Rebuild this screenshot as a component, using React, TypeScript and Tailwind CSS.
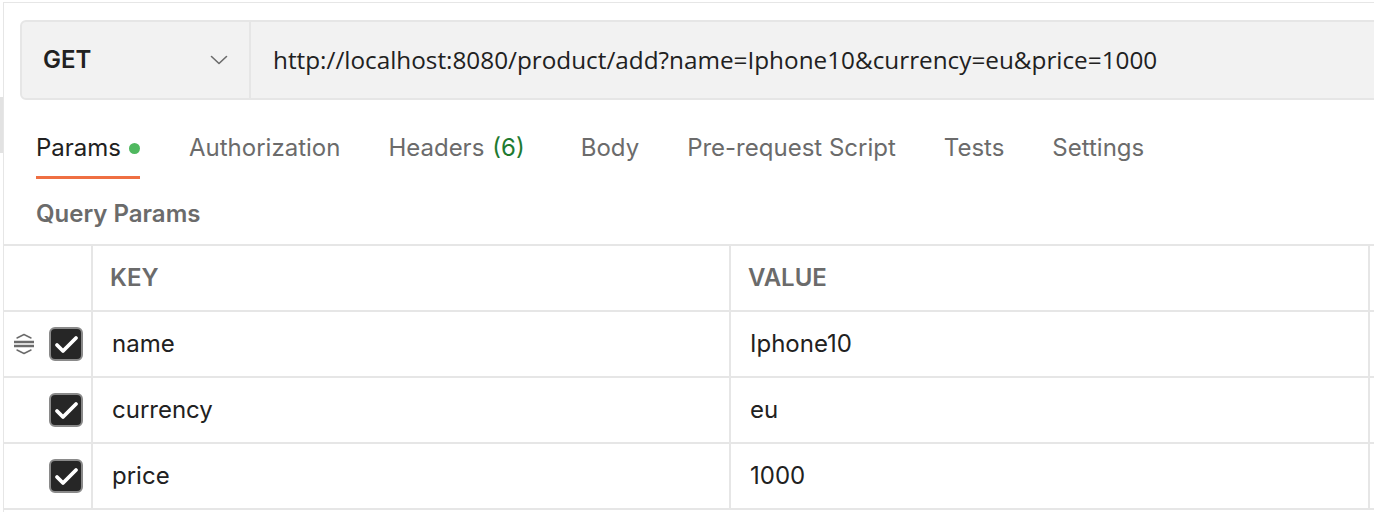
import React from 'react';

const tabs = [
  { label: 'Authorization' },
  { label: 'Headers', count: '(6)' },
  { label: 'Body' },
  { label: 'Pre-request Script' },
  { label: 'Tests' },
  { label: 'Settings' },
];

const params = [
  { key: 'name', value: 'Iphone10' },
  { key: 'currency', value: 'eu' },
  { key: 'price', value: '1000' },
];

const Checked = () => (
  <div className="w-[34px] h-[34px] rounded-[6px] bg-[#262626] border-2 border-[#8a8a8a] flex items-center justify-center">
    <svg width="30" height="30" viewBox="0 0 30 30" fill="none">
      <path d="M6 16 L12 22 L25 9" stroke="#fff" strokeWidth="3.8" strokeLinecap="round" strokeLinejoin="round" />
    </svg>
  </div>
);

const DragHandle = () => (
  <svg width="22" height="22" viewBox="0 0 22 22" fill="none" stroke="#6b6b6b">
    <path d="M4 5 L11 1.5 L18 5" strokeWidth="1.4" strokeLinecap="round" strokeLinejoin="round" />
    <path d="M1 9 H21 M1 13 H21" strokeWidth="2.4" />
    <path d="M4 17 L11 20.5 L18 17" strokeWidth="1.4" strokeLinecap="round" strokeLinejoin="round" />
  </svg>
);

export default function App() {
  return (
    <div className="w-[1374px] h-[512px] bg-white overflow-hidden flex font-[family-name:Inter,sans-serif]">
      {/* left gutter */}
      <div className="w-[3px] flex flex-col">
        <div className="h-[97px]" />
        <div className="h-[56px] bg-[#e2e2e2]" />
      </div>

      <div className="flex-1 min-w-0 mt-[2px] border-l border-t border-[#e6e6e6] overflow-hidden">
        {/* request bar */}
        <div className="pl-4 pt-[17px]">
          <div className="w-[1400px] h-[80px] flex bg-[#f2f2f2] border-2 border-[#e6e6e6] rounded-l-[6px]">
            <div className="w-[229px] flex items-center justify-between pl-[21px] pr-[21px] border-r-2 border-[#e6e6e6]">
              <span className="text-[24px] font-semibold text-[#212121]">GET</span>
              <svg width="18" height="10" viewBox="0 0 18 10" fill="none">
                <path d="M1.5 1.5 L9 8.5 L16.5 1.5" stroke="#6b6b6b" strokeWidth="1.6" strokeLinecap="round" strokeLinejoin="round" />
              </svg>
            </div>
            <div className="flex items-center pl-[22px] text-[24.3px] text-[#212121] font-[family-name:'Open_Sans',sans-serif]">
              http://localhost:8080/product/add?name=Iphone10&amp;currency=eu&amp;price=1000
            </div>
          </div>
        </div>

        {/* tabs */}
        <div className="flex gap-[48px] pl-8 mt-[20px] text-[24px] text-[#6b6b6b]">
          <div className="h-[59px] flex flex-col mr-[1px]">
            <div className="flex-1 flex items-center gap-[8px] text-[#212121]">
              Params
              <span className="w-[11px] h-[11px] rounded-full bg-[#4fb85f]" />
            </div>
            <div className="h-[3px] bg-[#ef6f42]" />
          </div>
          {tabs.map((t) => (
            <div key={t.label} className={`h-[59px] flex flex-col ${t.count ? 'pr-[8px]' : ''}`}>
              <div className="flex-1 flex items-center gap-[8px]">
                {t.label}
                {t.count && <span className="text-[#1e7a30]">{t.count}</span>}
              </div>
              <div className="h-[3px]" />
            </div>
          ))}
        </div>

        <div className="pl-8 pt-[4px] h-[65px] flex items-center text-[24px] font-semibold text-[#6b6b6b]">
          Query Params
        </div>

        {/* table */}
        <div className="border-t-2 border-[#e6e6e6]">
          <div className="flex h-[66px] border-b-2 border-[#e6e6e6] text-[24px] font-semibold text-[#6b6b6b]">
            <div className="w-[89px] border-r-2 border-[#e6e6e6]" />
            <div className="w-[638px] border-r-2 border-[#e6e6e6] flex items-center pl-[17px]">KEY</div>
            <div className="w-[639px] border-r-2 border-[#e6e6e6] flex items-center pl-[17px]">VALUE</div>
          </div>
          {params.map((p, i) => (
            <div key={p.key} className="flex h-[66px] border-b-2 border-[#e6e6e6] text-[24px] text-[#212121]">
              <div className="w-[89px] border-r-2 border-[#e6e6e6] flex items-center pl-[9px] gap-[14px]">
                <div className="w-[22px]">{i === 0 && <DragHandle />}</div>
                <Checked />
              </div>
              <div className="w-[638px] border-r-2 border-[#e6e6e6] flex items-center pl-[19px]">{p.key}</div>
              <div className="w-[639px] border-r-2 border-[#e6e6e6] flex items-center pl-[19px]">{p.value}</div>
            </div>
          ))}
        </div>
      </div>
    </div>
  );
}
